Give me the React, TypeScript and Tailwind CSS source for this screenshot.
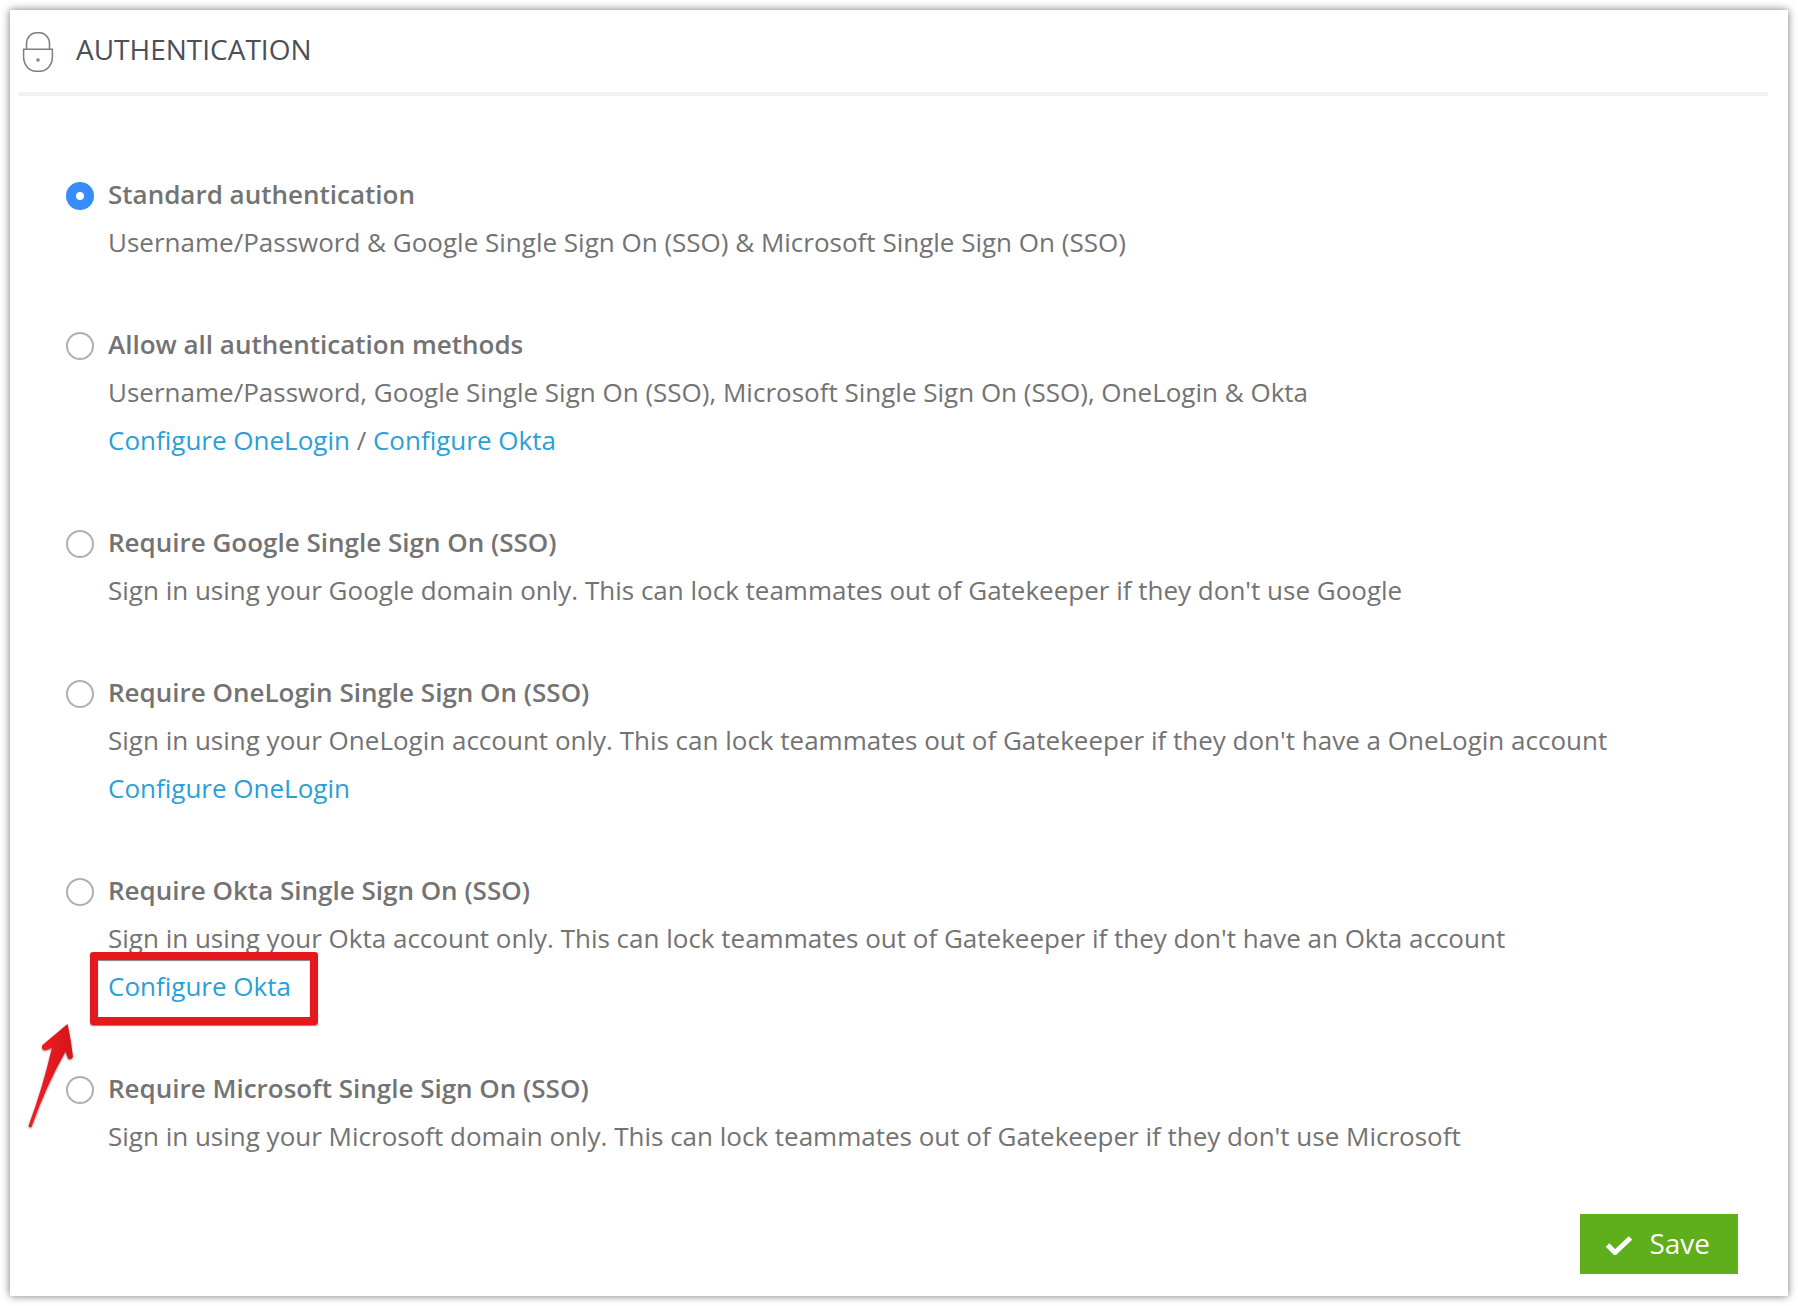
// src/App.tsx
import { Fragment, useState } from "react";

type ConfigLink = {
  label: string;
  href: string;
  highlighted?: boolean;
};

type AuthOption = {
  id: string;
  title: string;
  description: string;
  links?: ConfigLink[];
};

const ONELOGIN: ConfigLink = { label: "Configure OneLogin", href: "#onelogin" };
const OKTA: ConfigLink = { label: "Configure Okta", href: "#okta" };

const OPTIONS: AuthOption[] = [
  {
    id: "standard",
    title: "Standard authentication",
    description:
      "Username/Password & Google Single Sign On (SSO) & Microsoft Single Sign On (SSO)",
  },
  {
    id: "all",
    title: "Allow all authentication methods",
    description:
      "Username/Password, Google Single Sign On (SSO), Microsoft Single Sign On (SSO), OneLogin & Okta",
    links: [ONELOGIN, OKTA],
  },
  {
    id: "google",
    title: "Require Google Single Sign On (SSO)",
    description:
      "Sign in using your Google domain only. This can lock teammates out of Gatekeeper if they don't use Google",
  },
  {
    id: "onelogin",
    title: "Require OneLogin Single Sign On (SSO)",
    description:
      "Sign in using your OneLogin account only. This can lock teammates out of Gatekeeper if they don't have a OneLogin account",
    links: [ONELOGIN],
  },
  {
    id: "okta",
    title: "Require Okta Single Sign On (SSO)",
    description:
      "Sign in using your Okta account only. This can lock teammates out of Gatekeeper if they don't have an Okta account",
    links: [{ ...OKTA, highlighted: true }],
  },
  {
    id: "microsoft",
    title: "Require Microsoft Single Sign On (SSO)",
    description:
      "Sign in using your Microsoft domain only. This can lock teammates out of Gatekeeper if they don't use Microsoft",
  },
];

function LockIcon() {
  return (
    <svg
      className="h-10 w-8 shrink-0"
      viewBox="0 0 32 40"
      fill="none"
      stroke="#7d7e83"
      strokeWidth="1.5"
      aria-hidden="true"
    >
      <path d="M4.5 17V11.500C4.500 5.500 9 .8 14.500 .8h3C23 .8 27.500 5.500 27.500 11.500V17" />
      <path d="M1.600 17.200h28.800v7.300C30.400 33 25 39.200 18 39.200h-4C7 39.200 1.600 33 1.600 24.500z" />
      <rect x="14.500" y="26.500" width="3" height="3" fill="#7d7e83" stroke="none" />
    </svg>
  );
}

// red frame and arrow drawn over the page around a link
function Callout() {
  return (
    <>
      <span className="pointer-events-none absolute -top-[10px] -right-[27px] -bottom-[15px] -left-[18px] rounded-[3px] border-8 border-[#e4181d] shadow-[0_1px_1px_rgba(0,0,0,0.5),inset_0_1px_1px_rgba(0,0,0,0.5)]" />
      <svg
        className="pointer-events-none absolute top-[61px] -left-[82px] h-28 w-12 drop-shadow-[0_1px_1px_rgba(0,0,0,0.45)]"
        viewBox="0 0 48 112"
        aria-hidden="true"
      >
        <defs>
          <linearGradient id="arrow" x1="0" y1="0" x2="1" y2="0.3">
            <stop offset="0.45" stopColor="#ee1b21" />
            <stop offset="0.8" stopColor="#d8161a" />
          </linearGradient>
        </defs>
        <path
          d="M41.500 1L16.500 22Q15 25 17.500 27Q20 28 26 24.500Q17 64 2.500 103Q3.500 105 5.500 104Q20 63 39.500 28.500L42 35.500Q44.500 37.500 47 34Q44.500 14 41.500 1Z"
          fill="url(#arrow)"
        />
      </svg>
    </>
  );
}

type OptionProps = {
  option: AuthOption;
  checked: boolean;
  onSelect: (id: string) => void;
};

function OptionRow({ option, checked, onSelect }: OptionProps) {
  return (
    <div className="flex items-start gap-[14px]">
      <input
        type="radio"
        id={option.id}
        name="authentication"
        checked={checked}
        onChange={() => onSelect(option.id)}
        className="mt-3 h-7 w-7 shrink-0 appearance-none rounded-full border-2 border-[#b0b0b0] bg-white checked:border-[10px] checked:border-[#378cfb]"
      />
      <div className="min-w-0 leading-[48px]">
        <label htmlFor={option.id} className="block font-semibold">
          {option.title}
        </label>
        <p>{option.description}</p>
        {option.links && (
          <p>
            {option.links.map((link, i) => (
              <Fragment key={link.label}>
                {i > 0 && " / "}
                <span className="relative inline-block">
                  <a href={link.href} className="text-[#2a9fd8]">
                    {link.label}
                  </a>
                  {link.highlighted && <Callout />}
                </span>
              </Fragment>
            ))}
          </p>
        )}
      </div>
    </div>
  );
}

export default function App() {
  const [selected, setSelected] = useState("standard");

  return (
    <div className="bg-white p-[10px] font-['Open_Sans',sans-serif] text-[26px] text-[#737373]">
      <main className="bg-white pt-[22px] pr-5 pb-[22px] pl-2 shadow-[0_0_8px_rgba(0,0,0,0.55)]">
        <header className="flex items-start gap-[22px] border-b-4 border-[#f1f1f1] pb-5 pl-1">
          <LockIcon />
          <h1 className="text-[28px] leading-[34px] text-[#4d4f57]">
            AUTHENTICATION
          </h1>
        </header>

        <form
          className="pt-[74px] pr-[30px] pl-12"
          onSubmit={(e) => e.preventDefault()}
        >
          <div className="flex flex-col gap-[54px]">
            {OPTIONS.map((option) => (
              <OptionRow
                key={option.id}
                option={option}
                checked={selected === option.id}
                onSelect={setSelected}
              />
            ))}
          </div>

          <div className="mt-[54px] flex justify-end">
            <button
              type="submit"
              className="flex h-[60px] items-center gap-4 bg-[#5fae1b] pr-7 pb-[2px] pl-[25px] text-[28px] font-medium text-white"
            >
              <svg className="mt-1 h-5 w-7" viewBox="0 0 28 20" aria-hidden="true">
                <path
                  d="M2.500 10L10 17.500L25.500 3"
                  fill="none"
                  stroke="currentColor"
                  strokeWidth="5"
                />
              </svg>
              Save
            </button>
          </div>
        </form>
      </main>
    </div>
  );
}
